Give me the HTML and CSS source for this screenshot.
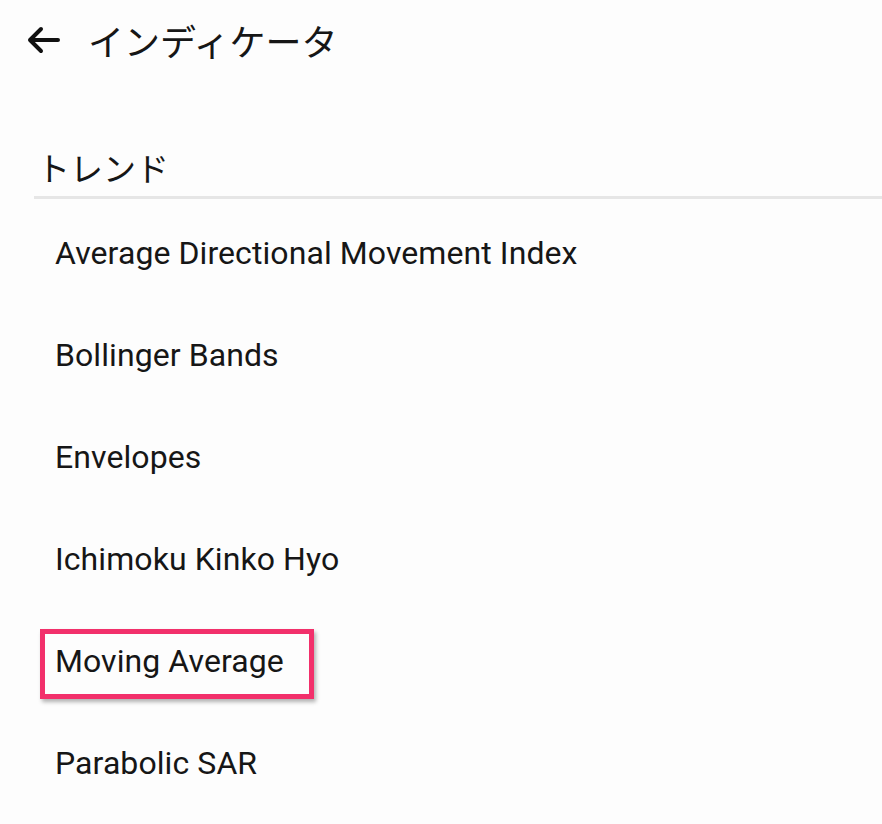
FILE: index.html
```html
<!DOCTYPE html>
<html lang="ja">
<head>
<meta charset="utf-8">
<link rel="stylesheet" href="styles.css">
</head>
<body>
<header class="appbar">
  <svg class="back" width="34" height="28" viewBox="0 0 34 28"><path d="M32 14H4M15 3L4 14l11 11" fill="none" stroke="#111" stroke-width="4" stroke-linecap="round" stroke-linejoin="round"/></svg>
  <h1 class="title">インディケータ</h1>
</header>
<section class="group">
  <h2 class="group-title">トレンド</h2>
  <ul class="list">
    <li class="item">Average Directional Movement Index</li>
    <li class="item">Bollinger Bands</li>
    <li class="item">Envelopes</li>
    <li class="item">Ichimoku Kinko Hyo</li>
    <li class="item"><span class="highlight">Moving Average</span></li>
    <li class="item">Parabolic SAR</li>
  </ul>
</section>
</body>
</html>
```
FILE: styles.css
```css
html, body {
  margin: 0;
  padding: 0;
  background: #fdfdfd;
  color: #161616;
  font-family: Roboto, "Noto Sans CJK JP", sans-serif;
}
.appbar {
  display: flex;
  align-items: center;
  height: 80px;
  padding-left: 26px;
  gap: 28px;
}
.back { display: block; }
.title {
  margin: 0;
  font-family: "Noto Sans CJK JP", sans-serif;
  font-weight: 400;
  font-size: 36px;
  line-height: 1;
}
.group { margin-top: 58px; }
.group-title {
  margin: 0 0 0 34px;
  padding-left: 3px;
  font-family: "Noto Sans CJK JP", sans-serif;
  font-weight: 400;
  font-size: 33px;
  line-height: 58px;
  border-bottom: 3px solid #e6e6e6;
}
.list {
  list-style: none;
  margin: 0;
  padding: 3px 0 0;
}
.item {
  height: 102px;
  display: flex;
  align-items: center;
  padding-left: 55px;
  font-size: 32px;
  letter-spacing: 0.08px;
}
.highlight {
  box-sizing: border-box;
  margin-left: -15px;
  margin-top: 6px;
  padding: 0 25px 6px 10px;
  height: 70px;
  display: flex;
  align-items: center;
  border: 5px solid #f2306b;
  box-shadow: 2px 3px 4px rgba(0,0,0,0.3);
}
```
